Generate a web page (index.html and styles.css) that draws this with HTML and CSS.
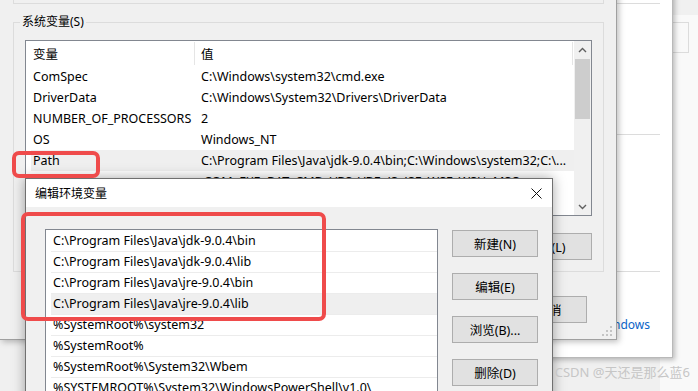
FILE: index.html
```html
<!DOCTYPE html>
<html lang="zh-CN">
<head>
    <meta charset="UTF-8">
    <meta name="viewport" content="width=device-width, initial-scale=1.0">
    <title>环境变量</title>
    <link rel="stylesheet" href="styles.css">
</head>
<body>
    <div class="desktop">
        <div class="back-window">
            <div class="back-field"></div>
        </div>

        <div class="sys-window">
            <div class="sys-line line-a"></div>
            <div class="sys-line line-b"></div>
            <div class="sys-line line-c"></div>
            <span class="sys-link">Windows</span>
        </div>

        <div class="env-dialog">
            <div class="user-group"></div>
            <fieldset class="sys-group">
                <legend>系统变量(S)</legend>
                <div class="listview">
                    <div class="lv-body">
                        <div class="lv-header">
                            <span class="col-name">变量</span>
                            <span class="col-value">值</span>
                        </div>
                        <div class="lv-row"><span class="col-name">ComSpec</span><span class="col-value">C:\Windows\system32\cmd.exe</span></div>
                        <div class="lv-row"><span class="col-name">DriverData</span><span class="col-value">C:\Windows\System32\Drivers\DriverData</span></div>
                        <div class="lv-row"><span class="col-name">NUMBER_OF_PROCESSORS</span><span class="col-value">2</span></div>
                        <div class="lv-row"><span class="col-name">OS</span><span class="col-value">Windows_NT</span></div>
                        <div class="lv-row selected"><span class="col-name">Path</span><span class="col-value">C:\Program Files\Java\jdk-9.0.4\bin;C:\Windows\system32;C:\...</span></div>
                        <div class="lv-row"><span class="col-name">PATHEXT</span><span class="col-value">.COM;.EXE;.BAT;.CMD;.VBS;.VBE;.JS;.JSE;.WSF;.WSH;.MSC</span></div>
                    </div>
                    <div class="scrollbar">
                        <span class="sb-arrow">
                            <svg width="9" height="6" viewBox="0 0 9 6"><path d="M1 5 L4.5 1.5 L8 5" fill="none" stroke="#606060" stroke-width="1.4"/></svg>
                        </span>
                        <span class="sb-thumb"></span>
                        <span class="sb-arrow sb-down">
                            <svg width="9" height="6" viewBox="0 0 9 6"><path d="M1 1 L4.5 4.5 L8 1" fill="none" stroke="#606060" stroke-width="1.4"/></svg>
                        </span>
                    </div>
                </div>
                <div class="btn-row">
                    <button class="btn wide">新建(W)...</button>
                    <button class="btn wide">编辑(I)...</button>
                    <button class="btn wide">删除(L)</button>
                </div>
            </fieldset>
            <div class="dialog-buttons">
                <button class="btn">确定</button>
                <button class="btn">取消</button>
            </div>
            <svg class="grip" width="11" height="11" viewBox="0 0 11 11">
                <rect x="8" y="0" width="2" height="2" fill="#c4c4c4"/>
                <rect x="4" y="4" width="2" height="2" fill="#c4c4c4"/>
                <rect x="8" y="4" width="2" height="2" fill="#c4c4c4"/>
                <rect x="0" y="8" width="2" height="2" fill="#c4c4c4"/>
                <rect x="4" y="8" width="2" height="2" fill="#c4c4c4"/>
                <rect x="8" y="8" width="2" height="2" fill="#c4c4c4"/>
            </svg>
        </div>

        <div class="edit-dialog">
            <div class="title-bar">
                <span class="title">编辑环境变量</span>
                <svg class="close" width="11" height="11" viewBox="0 0 11 11"><path d="M0.5 0.5 L10.5 10.5 M10.5 0.5 L0.5 10.5" stroke="#111" stroke-width="1"/></svg>
            </div>
            <div class="edit-body">
                <div class="path-list">
                    <div class="path-row">C:\Program Files\Java\jdk-9.0.4\bin</div>
                    <div class="path-row">C:\Program Files\Java\jdk-9.0.4\lib</div>
                    <div class="path-row">C:\Program Files\Java\jre-9.0.4\bin</div>
                    <div class="path-row selected">C:\Program Files\Java\jre-9.0.4\lib</div>
                    <div class="path-row">%SystemRoot%\system32</div>
                    <div class="path-row">%SystemRoot%</div>
                    <div class="path-row">%SystemRoot%\System32\Wbem</div>
                    <div class="path-row">%SYSTEMROOT%\System32\WindowsPowerShell\v1.0\</div>
                </div>
                <div class="side-buttons">
                    <button class="btn">新建(N)</button>
                    <button class="btn">编辑(E)</button>
                    <button class="btn">浏览(B)...</button>
                    <button class="btn">删除(D)</button>
                </div>
            </div>
        </div>

        <div class="mark mark-path"></div>
        <div class="mark mark-java"></div>

        <div class="watermark">CSDN @天还是那么蓝6</div>
    </div>
</body>
</html>
```

FILE: styles.css
```css
body {
    margin: 0;
    font-family: "Noto Sans", "Noto Sans CJK SC", sans-serif;
    font-size: 12.5px;
    color: #000;
    background-color: #f0f0f0;
}
.desktop {
    position: relative;
    width: 698px;
    height: 391px;
    overflow: hidden;
    background-color: #f0f0f0;
}
.back-window {
    position: absolute;
    left: 660px;
    top: 15px;
    width: 60px;
    height: 380px;
    padding: 7px 0 0 12px;
    box-sizing: border-box;
    background-color: #f9f9f9;
}
.back-field {
    width: 17px;
    height: 31px;
    box-sizing: border-box;
    border: 1px solid #dcdcdc;
}
.sys-window {
    position: absolute;
    left: 380px;
    top: -40px;
    width: 293px;
    height: 398px;
    box-sizing: border-box;
    background-color: #fff;
    border-right: 1px solid #b9b9b9;
    border-bottom: 1px solid #b9b9b9;
    box-shadow: 2px 2px 5px rgba(0, 0, 0, 0.25);
}
.sys-line {
    position: absolute;
    left: 200px;
    width: 80px;
    height: 0;
    border-top: 1px solid #dcdcdc;
}
.line-a { top: 43px; }
.line-b { top: 174px; }
.line-c { top: 311px; }
.sys-link {
    position: absolute;
    right: 22px;
    top: 357px;
    font-size: 12px;
    color: #0a64c8;
    line-height: 16px;
}

/* environment variables dialog */
.env-dialog {
    position: absolute;
    left: 0;
    top: -30px;
    width: 617px;
    height: 370px;
    box-sizing: border-box;
    padding: 0 12px 0 13px;
    background-color: #f0f0f0;
    border-right: 1px solid #a0a0a0;
    border-bottom: 1px solid #a0a0a0;
    box-shadow: 2px 2px 6px rgba(0, 0, 0, 0.25);
}
.user-group {
    height: 34px;
    box-sizing: border-box;
    border: 1px solid #dcdcdc;
    border-top: none;
}
.sys-group {
    margin: 10px 0 0;
    padding: 0 11px 11px;
    border: 1px solid #dcdcdc;
}
.sys-group legend {
    margin-left: -5px;
    padding: 0 2px;
    font-size: 12px;
    line-height: 16px;
}
.listview {
    display: flex;
    margin-top: 10px;
    height: 176px;
    box-sizing: border-box;
    border: 1px solid #828790;
    background-color: #fff;
}
.lv-body {
    flex: 1;
    overflow: hidden;
    padding-left: 5px;
}
.lv-header {
    display: flex;
    height: 25px;
    align-items: stretch;
}
.lv-header span {
    display: flex;
    align-items: center;
    border-right: 1px solid #e5e5e5;
    margin: 1px 0;
}
.lv-row {
    display: flex;
    height: 21px;
    line-height: 21px;
    white-space: nowrap;
}
.lv-row.selected {
    background-color: #efefef;
}
.col-name {
    width: 161px;
    padding-left: 2px;
    flex-shrink: 0;
}
.lv-row .col-name {
    border-right: 1px solid transparent;
}
.col-value {
    width: 371px;
    padding-left: 6px;
    flex-shrink: 0;
    overflow: hidden;
}
.scrollbar {
    width: 17px;
    display: flex;
    flex-direction: column;
    background-color: #f0f0f0;
}
.sb-arrow {
    height: 17px;
    display: flex;
    align-items: center;
    justify-content: center;
}
.sb-thumb {
    height: 60px;
    margin: 1px 1px 0;
    background-color: #cdcdcd;
}
.sb-down {
    margin-top: auto;
}
.btn {
    height: 27px;
    padding: 0;
    box-sizing: border-box;
    border: 1px solid #adadad;
    background-color: #e1e1e1;
    font-family: inherit;
    font-size: 12.5px;
    color: #000;
}
.btn-row {
    display: flex;
    justify-content: flex-end;
    gap: 8px;
    margin-top: 17px;
}
.btn-row .btn {
    width: 92px;
}
.dialog-buttons {
    display: flex;
    justify-content: flex-end;
    gap: 8px;
    margin-top: 24px;
    padding-right: 17px;
}
.dialog-buttons .btn {
    width: 76px;
}
.grip {
    position: absolute;
    right: 3px;
    bottom: 2px;
}

/* edit dialog */
.edit-dialog {
    position: absolute;
    left: 25px;
    top: 178px;
    width: 528px;
    height: 240px;
    box-sizing: border-box;
    border: 1px solid #707070;
    background-color: #f0f0f0;
    box-shadow: 0 0 12px rgba(0, 0, 0, 0.35);
}
.title-bar {
    display: flex;
    align-items: center;
    justify-content: space-between;
    height: 28px;
    padding: 0 9px;
    background-color: #fff;
}
.title {
    font-size: 12px;
}
.close {
    margin-right: 1px;
}
.edit-body {
    display: flex;
    gap: 14px;
    padding: 22px 13px 0 19px;
}
.path-list {
    width: 393px;
    height: 200px;
    box-sizing: border-box;
    padding-top: 1px;
    border: 1px solid #828790;
    background-color: #fff;
}
.path-row {
    height: 21px;
    box-sizing: border-box;
    line-height: 20px;
    margin-left: 5px;
    padding-left: 2px;
    border-bottom: 1px solid #ececec;
    white-space: nowrap;
}
.path-row.selected {
    background-color: #efefef;
}
.side-buttons {
    display: flex;
    flex-direction: column;
    gap: 16px;
    margin-top: 1px;
}
.side-buttons .btn {
    width: 86px;
}

/* red annotation boxes */
.mark {
    position: absolute;
    border: 4px solid #ef4b4b;
    border-radius: 7px;
    box-sizing: border-box;
}
.mark-path {
    left: 12px;
    top: 151px;
    width: 88px;
    height: 27px;
}
.mark-java {
    left: 21px;
    top: 212px;
    width: 305px;
    height: 109px;
}
.watermark {
    position: absolute;
    right: 8px;
    bottom: 10px;
    font-size: 13px;
    color: #c6c6c6;
}
```
